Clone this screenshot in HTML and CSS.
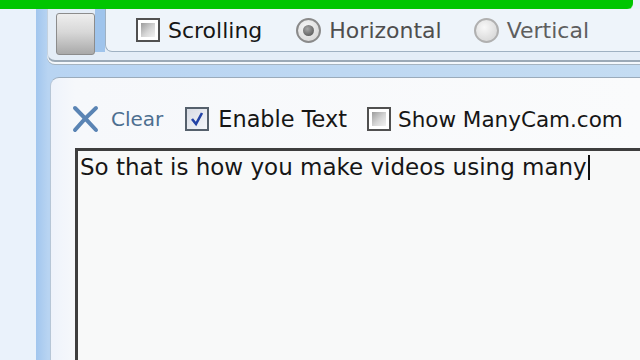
FILE: index.html
```html
<!DOCTYPE html>
<html lang="en">
<head>
  <meta charset="UTF-8">
  <title>ManyCam Text Settings</title>
  <link rel="stylesheet" href="styles.css">
</head>
<body>
  <div class="progress"></div>
  <div class="app">
    <div class="side"></div>
    <div class="main">
      <!-- top options strip -->
      <div class="top-group">
        <div class="big-btn"></div>
        <div class="sep"></div>
        <div class="options">
          <label class="opt enabled"><span class="box"><span class="box-in"></span></span>Scrolling</label>
          <label class="opt muted"><span class="radio on"><span class="dot"></span></span>Horizontal</label>
          <label class="opt muted light"><span class="radio"></span>Vertical</label>
        </div>
      </div>

      <!-- text panel -->
      <div class="panel">
        <div class="toolbar">
          <span class="clear">
            <svg width="27" height="28" viewBox="0 0 27 28">
              <path d="M3 3 Q13 13 24 25" stroke="#5a84b4" stroke-width="4" fill="none" stroke-linecap="round"/>
              <path d="M24 3 Q13 13 3 25" stroke="#5a84b4" stroke-width="4" fill="none" stroke-linecap="round"/>
            </svg>
            <span class="clear-text">Clear</span>
          </span>
          <label class="opt enabled"><span class="box checked">
            <svg width="16" height="16" viewBox="0 0 16 16"><path d="M3 8 L7 13 L13 2" stroke="#2343a6" stroke-width="2.6" fill="none"/></svg>
          </span>Enable Text</label>
          <label class="opt enabled narrow"><span class="box"><span class="box-in"></span></span>Show ManyCam.com</label>
        </div>
        <div class="text-box"><span class="typed">So that is how you make videos using many</span><span class="caret"></span></div>
      </div>
    </div>
  </div>
</body>
</html>
```

FILE: styles.css
```css
html, body {
  margin: 0;
  width: 640px;
  height: 360px;
  overflow: hidden;
}
body {
  background: #eaf2fb;
  font-family: "DejaVu Sans", Verdana, sans-serif;
  color: #161616;
}
.progress {
  width: 633px;
  height: 9px;
  background: #00c600;
  border-bottom-right-radius: 6px;
  box-shadow: 0 1px 0 #8ee08e;
}
.app {
  display: flex;
  height: 351px;
}
.side {
  width: 36px;
  background: #eaf2fb;
}
.main {
  width: 604px;
  display: flex;
  flex-direction: column;
  padding-left: 11px;
  box-sizing: border-box;
  background: linear-gradient(90deg, #a2c6ee 0, #b8d4f2 12px, #c4dcf2 100%);
}
/* Top strip */
.top-group {
  display: flex;
  align-items: flex-start;
  height: 51px;
  padding-left: 8px;
  background: #e4edf7;
  border-left: 1px solid #c4d2e0;
  border-bottom: 2px solid #9ba9b6;
  border-bottom-left-radius: 8px;
  box-shadow: 0 2px 0 #f4f8fc, 0 3px 0 #a6b4c0;
}
.big-btn {
  width: 37px;
  height: 40px;
  margin-top: 4px;
  border: 1px solid #8c8c8c;
  border-radius: 3px;
  background: linear-gradient(180deg, #eeeeee 0%, #d8d8d8 45%, #a9a9a9 100%);
}
.sep {
  width: 10px;
  height: 43px;
  background: #9fc4ec;
}
.options {
  flex: 1;
  height: 42px;
  display: flex;
  align-items: center;
  gap: 32px;
  padding-left: 30px;
  background: #eef4fa;
  border-left: 1px solid #9fb1c2;
  border-bottom: 1px solid #9fb1c2;
  border-bottom-left-radius: 7px;
}
.opt {
  display: flex;
  align-items: center;
  gap: 8px;
  font-size: 22px;
  white-space: nowrap;
}
.options .opt.enabled { margin-right: 2px; }
.opt.muted { color: #4e4e4e; }
.opt.muted.light { color: #5e5e5e; }
.box {
  flex: none;
  width: 20px;
  height: 20px;
  border: 2px solid #505050;
  background: #fff;
  display: flex;
  align-items: center;
  justify-content: center;
}
.box-in {
  width: 14px;
  height: 14px;
  background: linear-gradient(135deg, #9c9c9c 0%, #d6d6d6 55%, #f2f2f2 100%);
}
.box.checked {
  border-color: #55606c;
  background: linear-gradient(135deg, #d8dce4 0%, #f4f6fa 100%);
}
.radio {
  width: 21px;
  height: 21px;
  border-radius: 50%;
  border: 2px solid #b0b0b0;
  background: radial-gradient(circle at 40% 35%, #f8f8f8 0, #dcdcdc 70%);
  display: flex;
  align-items: center;
  justify-content: center;
}
.radio.on { border-color: #8a8a8a; }
.dot {
  width: 11px;
  height: 11px;
  border-radius: 50%;
  background: radial-gradient(circle at 40% 35%, #a8a8a8 0, #5c5c5c 80%);
}
/* Text panel */
.panel {
  flex: 1;
  margin-top: 15px;
  margin-left: 3px;
  padding: 26px 0 0 21px;
  background: linear-gradient(90deg, #eef3fb 0, #f6f8fb 24px, #fafbfc 100%);
  border-top: 1px solid #9aabbb;
  border-left: 1px solid #b6c6d6;
  border-top-left-radius: 9px;
  display: flex;
  flex-direction: column;
  overflow: hidden;
}
.toolbar {
  display: flex;
  align-items: center;
  height: 30px;
  gap: 22px;
}
.toolbar .opt { font-size: 22.4px; gap: 9px; }
.toolbar .opt.narrow { font-size: 21.5px; gap: 7px; margin-left: -2px; }
.clear {
  display: flex;
  align-items: center;
  gap: 12px;
}
.clear-text {
  font-size: 20px;
  color: #4d6f90;
}
.text-box {
  flex: 1;
  display: flex;
  align-items: flex-start;
  margin: 14px 0 0 3px;
  padding: 2px 0 0 2px;
  border-top: 3px solid #3e3e3e;
  border-left: 3px solid #3e3e3e;
  background: #f8f9f9;
  font-size: 23px;
  line-height: 28px;
}
.typed { white-space: nowrap; }
.caret {
  width: 2px;
  height: 25px;
  margin: 2px 0 0 1px;
  background: #111;
}
```
